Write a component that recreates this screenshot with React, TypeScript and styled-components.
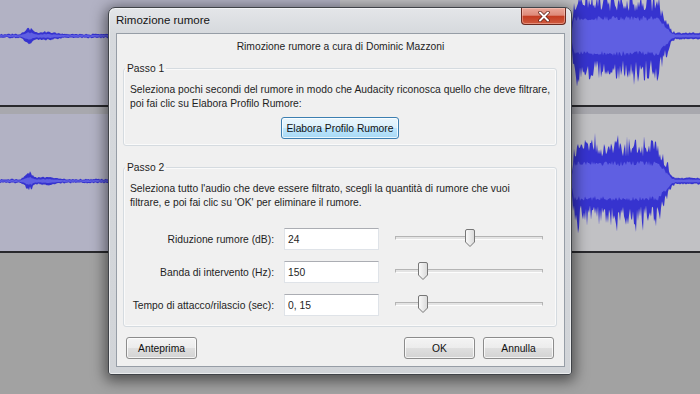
import React from "react";
import styled, { createGlobalStyle } from "styled-components";

const GlobalStyle = createGlobalStyle`
  html, body { margin: 0; padding: 0; }
  body { width: 700px; height: 394px; overflow: hidden; background: #a2a2a2; }
`;

const Screen = styled.div`
  position: relative;
  width: 700px;
  height: 394px;
  overflow: hidden;
  background: #a2a2a2;
  font-family: "Liberation Sans", Arial, sans-serif;
`;

const TrackList = styled.div`
  display: flex;
  flex-direction: column;
`;

const Track = styled.div<{ $h: number }>`
  height: ${(p) => p.$h}px;
  background: linear-gradient(to right, #b2b2c4 0, #b2b2c4 340px, #c1c1c4 340px);
  border-bottom: 2px solid #29292d;
  overflow: hidden;
`;

const TrackGap = styled.div`
  height: 7px;
  background: #a8a8ae;
`;

const WaveSvg = styled.svg`
  display: block;
`;

// ---- waveform drawing ----
const makeRand = (seed: number) => {
  let s = seed;
  return () => {
    s = (s * 16807) % 2147483647;
    return (s - 1) / 2147483646;
  };
};

const buildWave = (center: number, seed: number) => {
  const rand = makeRand(seed);
  const top: string[] = [];
  const bot: string[] = [];
  const itop: string[] = [];
  const ibot: string[] = [];
  for (let x = 0; x <= 700; x++) {
    let up: number;
    let down: number;
    let iu: number;
    let id: number;
    if (x >= 572 && x <= 674) {
      const rise = Math.min(1, (x - 571) / 3);
      const fall = x > 658 ? Math.max(0.12, (674 - x) / 16) : 1;
      const env = rise * fall;
      up = (24 + rand() * 18) * env;
      down = (24 + rand() * 20) * env;
      if (rand() > 0.8) down += rand() * 12 * env;
      if (rand() > 0.8) up += rand() * 10 * env;
      iu = (15 + rand() * 5) * env;
      id = (15 + rand() * 5) * env;
    } else {
      const blip =
        7 * Math.exp(-(((x - 29) / 5) ** 2)) + 2.5 * Math.exp(-(((x - 46) / 12) ** 2));
      const base = x > 674 ? 2.4 : 1.1;
      up = base + rand() * 1.3 + blip * (0.6 + rand() * 0.5);
      down = base + rand() * 1.3 + blip * (0.6 + rand() * 0.5);
      iu = up * 0.45;
      id = down * 0.45;
    }
    top.push(`${x},${(center - up).toFixed(1)}`);
    bot.unshift(`${x},${(center + down).toFixed(1)}`);
    itop.push(`${x},${(center - iu).toFixed(1)}`);
    ibot.unshift(`${x},${(center + id).toFixed(1)}`);
  }
  return {
    outer: `M${top.join(" L")} L${bot.join(" L")} Z`,
    inner: `M${itop.join(" L")} L${ibot.join(" L")} Z`,
  };
};

const Waveform = ({ height, center, seed }: { height: number; center: number; seed: number }) => {
  const wave = React.useMemo(() => buildWave(center, seed), [center, seed]);
  return (
    <WaveSvg width={700} height={height} viewBox={`0 0 700 ${height}`}>
      <path d={wave.outer} fill="#3633cf" />
      <path d={wave.inner} fill="#5f5fe2" />
    </WaveSvg>
  );
};

// ---- dialog window ----
const Window = styled.div`
  position: absolute;
  left: 108px;
  top: 7px;
  width: 464px;
  height: 368px;
  box-sizing: border-box;
  border: 1px solid #404348;
  border-radius: 7px 7px 3px 3px;
  background: linear-gradient(to bottom, #e4e6e9 0, #d6d9dd 25px, #d1d4d8 100%);
  box-shadow: 0 3px 14px 3px rgba(0, 0, 0, 0.5), inset 0 0 0 1px rgba(255, 255, 255, 0.55);
  display: flex;
  flex-direction: column;
  padding: 0 6px 7px 7px;
`;

const TitleBar = styled.div`
  height: 25px;
  display: flex;
  justify-content: space-between;
  align-items: flex-start;
`;

const Title = styled.div`
  font-size: 11.5px;
  line-height: 25px;
  color: #151515;
`;

const CloseButton = styled.div`
  width: 45px;
  height: 17px;
  margin-right: -1px;
  box-sizing: border-box;
  border: 1px solid #6b2a20;
  border-top: none;
  border-radius: 0 0 4px 4px;
  background: linear-gradient(to bottom, #eba89a 0%, #de8a79 45%, #c43d22 52%, #cf5a3f 100%);
  box-shadow: inset 0 0 0 1px rgba(255, 210, 200, 0.45);
  display: flex;
  align-items: center;
  justify-content: center;
`;

const Client = styled.div`
  flex: 1;
  box-sizing: border-box;
  background: #f0f0f0;
  border: 1px solid #969da6;
  display: flex;
  flex-direction: column;
  padding: 6px 6px 7px 6px;
  font-size: 10.3px;
  color: #1e1e1e;
`;

const Header = styled.div`
  text-align: center;
  line-height: 14px;
`;

const Group = styled.fieldset<{ $top: number }>`
  margin: ${(p) => p.$top}px 1px 0 0;
  padding: 0 6px 6px 6px;
  border: 1px solid #d5dbe0;
  border-radius: 3px;
  box-shadow: inset 0 0 0 1px #fafafa;
  min-width: 0;
`;

const Legend = styled.legend`
  padding: 0 2px;
  margin-left: -5px;
  line-height: 13px;
`;

const Paragraph = styled.p`
  margin: 8px 0 0 0;
  line-height: 14px;
  white-space: nowrap;
`;

const Center = styled.div`
  display: flex;
  justify-content: center;
  margin-top: 6px;
`;

const Button = styled.button<{ $focus?: boolean; $w: number }>`
  width: ${(p) => p.$w}px;
  height: 22px;
  padding: 0;
  font-family: "Liberation Sans", Arial, sans-serif;
  font-size: 10.3px;
  color: #111;
  border-radius: 3px;
  border: 1px solid ${(p) => (p.$focus ? "#3c7fb1" : "#8c8c8c")};
  background: ${(p) =>
    p.$focus
      ? "linear-gradient(to bottom, #eaf6fd 0%, #d9f0fc 50%, #bee6fd 50%, #a7d9f5 100%)"
      : "linear-gradient(to bottom, #f4f4f4 0%, #ececec 50%, #dfdfdf 50%, #d3d3d3 100%)"};
  box-shadow: inset 0 0 0 1px rgba(255, 255, 255, 0.75);
`;

const Fields = styled.div`
  display: grid;
  grid-template-columns: 144px 95px 1fr;
  column-gap: 10px;
  row-gap: 11px;
  margin-top: 18px;
  padding-bottom: 4px;
  align-items: center;
`;

const FieldLabel = styled.label`
  text-align: right;
  white-space: nowrap;
`;

const TextBox = styled.input`
  box-sizing: border-box;
  width: 95px;
  height: 22px;
  margin: 0;
  padding: 0 3px;
  border: 1px solid #dfe3e8;
  border-top-color: #abadb3;
  background: #fff;
  font-family: "Liberation Sans", Arial, sans-serif;
  font-size: 10.3px;
  color: #1e1e1e;
  outline: none;
`;

const Slider = styled.div`
  position: relative;
  width: 148px;
  height: 22px;
  margin-left: 6px;
  display: flex;
  align-items: center;
`;

const SliderTrack = styled.div`
  width: 100%;
  height: 2px;
  margin-top: -3px;
  background: #e4e4e4;
  border-top: 1px solid #b4b4b4;
  border-bottom: 1px solid #fdfdfd;
  border-left: 1px solid #b4b4b4;
  border-right: 1px solid #b4b4b4;
`;

const Thumb = styled.svg`
  position: absolute;
  top: 1px;
`;

const ButtonRow = styled.div`
  margin-top: auto;
  display: flex;
  gap: 8px;
  padding: 0 4px 0 3px;
`;

const Spacer = styled.div`
  flex: 1;
`;

const SliderField = ({ frac }: { frac: number }) => (
  <Slider>
    <SliderTrack />
    <Thumb width="12" height="19" viewBox="0 0 12 19" style={{ left: Math.round(frac * 137) }}>
      <defs>
        <linearGradient id="thumbFill" x1="0" y1="0" x2="1" y2="0">
          <stop offset="0" stopColor="#fbfbfb" />
          <stop offset="1" stopColor="#d9d9d9" />
        </linearGradient>
      </defs>
      <path
        d="M1.5 2 Q1.5 0.5 3 0.5 H9 Q10.5 0.5 10.5 2 V13 L6 17.5 L1.5 13 Z"
        fill="url(#thumbFill)"
        stroke="#777"
        strokeWidth="1"
      />
    </Thumb>
  </Slider>
);

const CloseGlyph = () => (
  <svg width="12" height="11" viewBox="0 0 12 11">
    <path d="M2 1.5 L10 9.5 M10 1.5 L2 9.5" stroke="#5a1e14" strokeWidth="3.4" strokeLinecap="round" />
    <path d="M2 1.5 L10 9.5 M10 1.5 L2 9.5" stroke="#ffffff" strokeWidth="2" strokeLinecap="round" />
  </svg>
);

const fields = [
  { label: "Riduzione rumore (dB):", value: "24", frac: 0.5 },
  { label: "Banda di intervento (Hz):", value: "150", frac: 0.16 },
  { label: "Tempo di attacco/rilascio (sec):", value: "0, 15", frac: 0.16 },
];

export default function App() {
  return (
    <Screen>
      <GlobalStyle />
      <TrackList>
        <Track $h={105}>
          <Waveform height={105} center={36} seed={11} />
        </Track>
        <TrackGap />
        <Track $h={137}>
          <Waveform height={137} center={67} seed={29} />
        </Track>
      </TrackList>

      <Window>
        <TitleBar>
          <Title>Rimozione rumore</Title>
          <CloseButton>
            <CloseGlyph />
          </CloseButton>
        </TitleBar>
        <Client>
          <Header>Rimozione rumore a cura di Dominic Mazzoni</Header>
          <Group $top={8}>
            <Legend>Passo 1</Legend>
            <Paragraph>
              Seleziona pochi secondi del rumore in modo che Audacity riconosca quello che deve filtrare,
              <br />
              poi fai clic su Elabora Profilo Rumore:
            </Paragraph>
            <Center>
              <Button $focus $w={118}>Elabora Profilo Rumore</Button>
            </Center>
          </Group>
          <Group $top={15}>
            <Legend>Passo 2</Legend>
            <Paragraph>
              Seleziona tutto l'audio che deve essere filtrato, scegli la quantità di rumore che vuoi
              <br />
              filtrare, e poi fai clic su 'OK' per eliminare il rumore.
            </Paragraph>
            <Fields>
              {fields.map((f) => (
                <React.Fragment key={f.label}>
                  <FieldLabel>{f.label}</FieldLabel>
                  <TextBox defaultValue={f.value} />
                  <SliderField frac={f.frac} />
                </React.Fragment>
              ))}
            </Fields>
          </Group>
          <ButtonRow>
            <Button $w={71}>Anteprima</Button>
            <Spacer />
            <Button $w={71}>OK</Button>
            <Button $w={71}>Annulla</Button>
          </ButtonRow>
        </Client>
      </Window>
    </Screen>
  );
}
